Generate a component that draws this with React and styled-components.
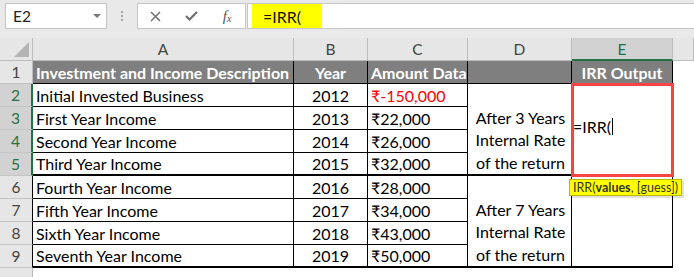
import React from 'react';
import styled, { createGlobalStyle } from 'styled-components';

const GlobalStyle = createGlobalStyle`
    body {
        margin: 0;
        background: #fff;
        font-family: Lato, "Noto Sans", "DejaVu Sans", sans-serif;
    }
`
const Window = styled.div`
    width: 694px;
    height: 277px;
    overflow: hidden;
    background: #fff;
`
const FormulaBar = styled.div`
    display: flex;
    align-items: flex-start;
    height: 38px;
    box-sizing: border-box;
    padding-top: 3px;
    background: #e9e9e9;
`
const NameBox = styled.div`
    width: 102px;
    height: 26px;
    margin-left: 5px;
    box-sizing: border-box;
    display: flex;
    align-items: center;
    justify-content: space-between;
    padding: 0 5px 0 7px;
    background: #fff;
    border: 1px solid #c6c6c6;
    font-size: 15.5px;
    color: #222;
`
const DropArrow = styled.span`
    width: 0;
    height: 0;
    border-left: 4px solid transparent;
    border-right: 4px solid transparent;
    border-top: 4px solid #777;
`
const Grip = styled.div`
    width: 30px;
    height: 26px;
    display: flex;
    flex-direction: column;
    align-items: center;
    justify-content: center;
    gap: 2px;

    span {
        width: 2px;
        height: 2px;
        background: #a4a4a4;
    }
`
const IconBox = styled.div`
    width: 109px;
    height: 26px;
    box-sizing: border-box;
    display: flex;
    background: #fff;
    border: 1px solid #c6c6c6;
`
const IconSlot = styled.div`
    width: 36px;
    display: flex;
    align-items: center;
    justify-content: center;
    color: #6a6a6a;
`
const Fx = styled.span`
    font-family: "Liberation Serif", serif;
    font-style: italic;
    font-size: 15px;
    color: #555;

    sub {
        font-size: 10px;
        vertical-align: -1px;
    }
`
const FormulaInput = styled.div`
    flex: 1;
    height: 26px;
    margin-left: 1px;
    box-sizing: border-box;
    display: flex;
    padding: 0 0 0 4px;
    background: #fff;
    border: 1px solid #c6c6c6;
    border-right: 0;
`
const Highlight = styled.span`
    width: 70px;
    box-sizing: border-box;
    display: flex;
    align-items: center;
    padding-left: 11px;
    background: #ffff00;
    font-size: 16px;
    color: #111;
`
const Sheet = styled.div`
    display: grid;
    grid-template-columns: 33px 261px 74px 100px 104px 101px 1fr;
    grid-auto-rows: 23px;
    font-size: 16px;
`
const Corner = styled.div`
    position: relative;
    background: #e6e6e6;
    border-right: 1px solid #bdbdbd;
    border-bottom: 1px solid #bdbdbd;

    &::after {
        content: "";
        position: absolute;
        right: 3px;
        bottom: 3px;
        border-left: 15px solid transparent;
        border-bottom: 15px solid #b4b4b4;
    }
`
const ColHead = styled.div`
    display: flex;
    align-items: center;
    justify-content: center;
    box-sizing: border-box;
    font-size: 15.5px;
    background: ${({ $sel }) => $sel ? '#d2d2d2' : '#e6e6e6'};
    color: ${({ $sel }) => $sel ? '#217346' : '#444'};
    border-right: 1px solid #bdbdbd;
    border-bottom: ${({ $sel }) => $sel ? '2px solid #217346' : '1px solid #bdbdbd'};
`
const RowNum = styled.div`
    display: flex;
    align-items: center;
    justify-content: center;
    box-sizing: border-box;
    font-size: 15.5px;
    background: ${({ $sel }) => $sel ? '#d2d2d2' : '#e6e6e6'};
    color: ${({ $sel }) => $sel ? '#217346' : '#444'};
    border-bottom: 1px solid #c4c4c4;
    border-right: ${({ $edge }) => $edge === 'sel' ? '2px solid #217346' : $edge === 'table' ? '1px solid #000' : '1px solid #bdbdbd'};
`
const Cell = styled.div`
    position: relative;
    display: flex;
    align-items: center;
    justify-content: ${({ $align }) => $align === 'center' ? 'center' : 'flex-start'};
    box-sizing: border-box;
    padding: 0 3px;
    white-space: nowrap;
    background: ${({ $head }) => $head ? '#7f7f7f' : '#fff'};
    color: ${({ $head, $neg }) => $head ? '#fff' : $neg ? '#ff0000' : '#000'};
    font-weight: ${({ $head }) => $head ? 700 : 400};
    border-right: 1px solid #000;
    border-bottom: ${({ $thick }) => $thick ? '2px' : '1px'} solid #000;
`
const Merged = styled(Cell)`
    grid-row: span 4;
    flex-direction: column;
    align-items: center;
    justify-content: flex-end;
    line-height: 22.5px;
    padding: 0 0 0 2px;
`
const EditCell = styled(Cell)`
    grid-row: span 4;
    padding: 0 0 6px 1px;
    outline: 3px solid #f44444;
    outline-offset: -2px;
    z-index: 1;
`
const Caret = styled.span`
    width: 1px;
    height: 17px;
    margin-left: 1px;
    background: #000;
`
const Tip = styled.div`
    position: absolute;
    top: calc(100% + 5px);
    left: -3px;
    height: 17px;
    box-sizing: border-box;
    display: flex;
    align-items: center;
    padding: 0 3px;
    background: #ffff00;
    border: 1px solid #b9b900;
    box-shadow: 2px 2px 0 rgba(0, 0, 0, 0.12);
    font-size: 12.5px;
    color: #333;

    b {
        font-weight: 700;
    }
`
const Blank = styled.div`
    background: #fff;
`

const rows = [
    { n: 2, desc: 'Initial Invested Business', year: 2012, amount: '₹-150,000', neg: true },
    { n: 3, desc: 'First Year Income', year: 2013, amount: '₹22,000' },
    { n: 4, desc: 'Second Year Income', year: 2014, amount: '₹26,000' },
    { n: 5, desc: 'Third Year Income', year: 2015, amount: '₹32,000' },
    { n: 6, desc: 'Fourth Year Income', year: 2016, amount: '₹28,000' },
    { n: 7, desc: 'Fifth Year Income', year: 2017, amount: '₹34,000' },
    { n: 8, desc: 'Sixth Year Income', year: 2018, amount: '₹43,000' },
    { n: 9, desc: 'Seventh Year Income', year: 2019, amount: '₹50,000' },
];

const XIcon = () => (
    <svg width="11" height="11" viewBox="0 0 11 11">
        <path d="M1 1L10 10M10 1L1 10" stroke="#707070" strokeWidth="1.5" fill="none" />
    </svg>
);

const CheckIcon = () => (
    <svg width="13" height="10" viewBox="0 0 13 10">
        <path d="M1 5L4.5 8.5L12 1" stroke="#707070" strokeWidth="2.2" fill="none" />
    </svg>
);

const App = () => {
    return (
        <>
        <GlobalStyle />
        <Window>
            <FormulaBar>
                <NameBox>
                    E2
                    <DropArrow />
                </NameBox>
                <Grip><span /><span /><span /></Grip>
                <IconBox>
                    <IconSlot><XIcon /></IconSlot>
                    <IconSlot><CheckIcon /></IconSlot>
                    <IconSlot><Fx>f<sub>x</sub></Fx></IconSlot>
                </IconBox>
                <FormulaInput>
                    <Highlight>=IRR(</Highlight>
                </FormulaInput>
            </FormulaBar>
            <Sheet>
                <Corner />
                <ColHead>A</ColHead>
                <ColHead>B</ColHead>
                <ColHead>C</ColHead>
                <ColHead>D</ColHead>
                <ColHead $sel>E</ColHead>
                <ColHead />

                <RowNum>1</RowNum>
                <Cell $head>Investment and Income Description</Cell>
                <Cell $head $align="center">Year</Cell>
                <Cell $head>Amount Data</Cell>
                <Cell $head />
                <Cell $head $align="center">IRR Output</Cell>
                <Blank />

                {rows.map((row) => {
                    const thick = row.n === 5 || row.n === 9;
                    return (
                        <React.Fragment key={row.n}>
                            <RowNum $sel={row.n <= 5} $edge={row.n <= 5 ? 'sel' : 'table'}>{row.n}</RowNum>
                            <Cell $thick={thick}>{row.desc}</Cell>
                            <Cell $thick={thick} $align="center">{row.year}</Cell>
                            <Cell $thick={thick} $neg={row.neg}>{row.amount}</Cell>
                            {row.n === 2 && (
                                <>
                                    <Merged $thick>
                                        <span>After 3 Years</span>
                                        <span>Internal Rate</span>
                                        <span>of the return</span>
                                    </Merged>
                                    <EditCell $thick>
                                        =IRR(<Caret />
                                        <Tip>IRR(<b>values</b>, [guess])</Tip>
                                    </EditCell>
                                </>
                            )}
                            {row.n === 6 && (
                                <>
                                    <Merged $thick>
                                        <span>After 7 Years</span>
                                        <span>Internal Rate</span>
                                        <span>of the return</span>
                                    </Merged>
                                    <Cell $thick style={{ gridRow: 'span 4' }} />
                                </>
                            )}
                            <Blank />
                        </React.Fragment>
                    );
                })}

                <RowNum />
                <Blank />
            </Sheet>
        </Window>
        </>
    );
}

export default App;
